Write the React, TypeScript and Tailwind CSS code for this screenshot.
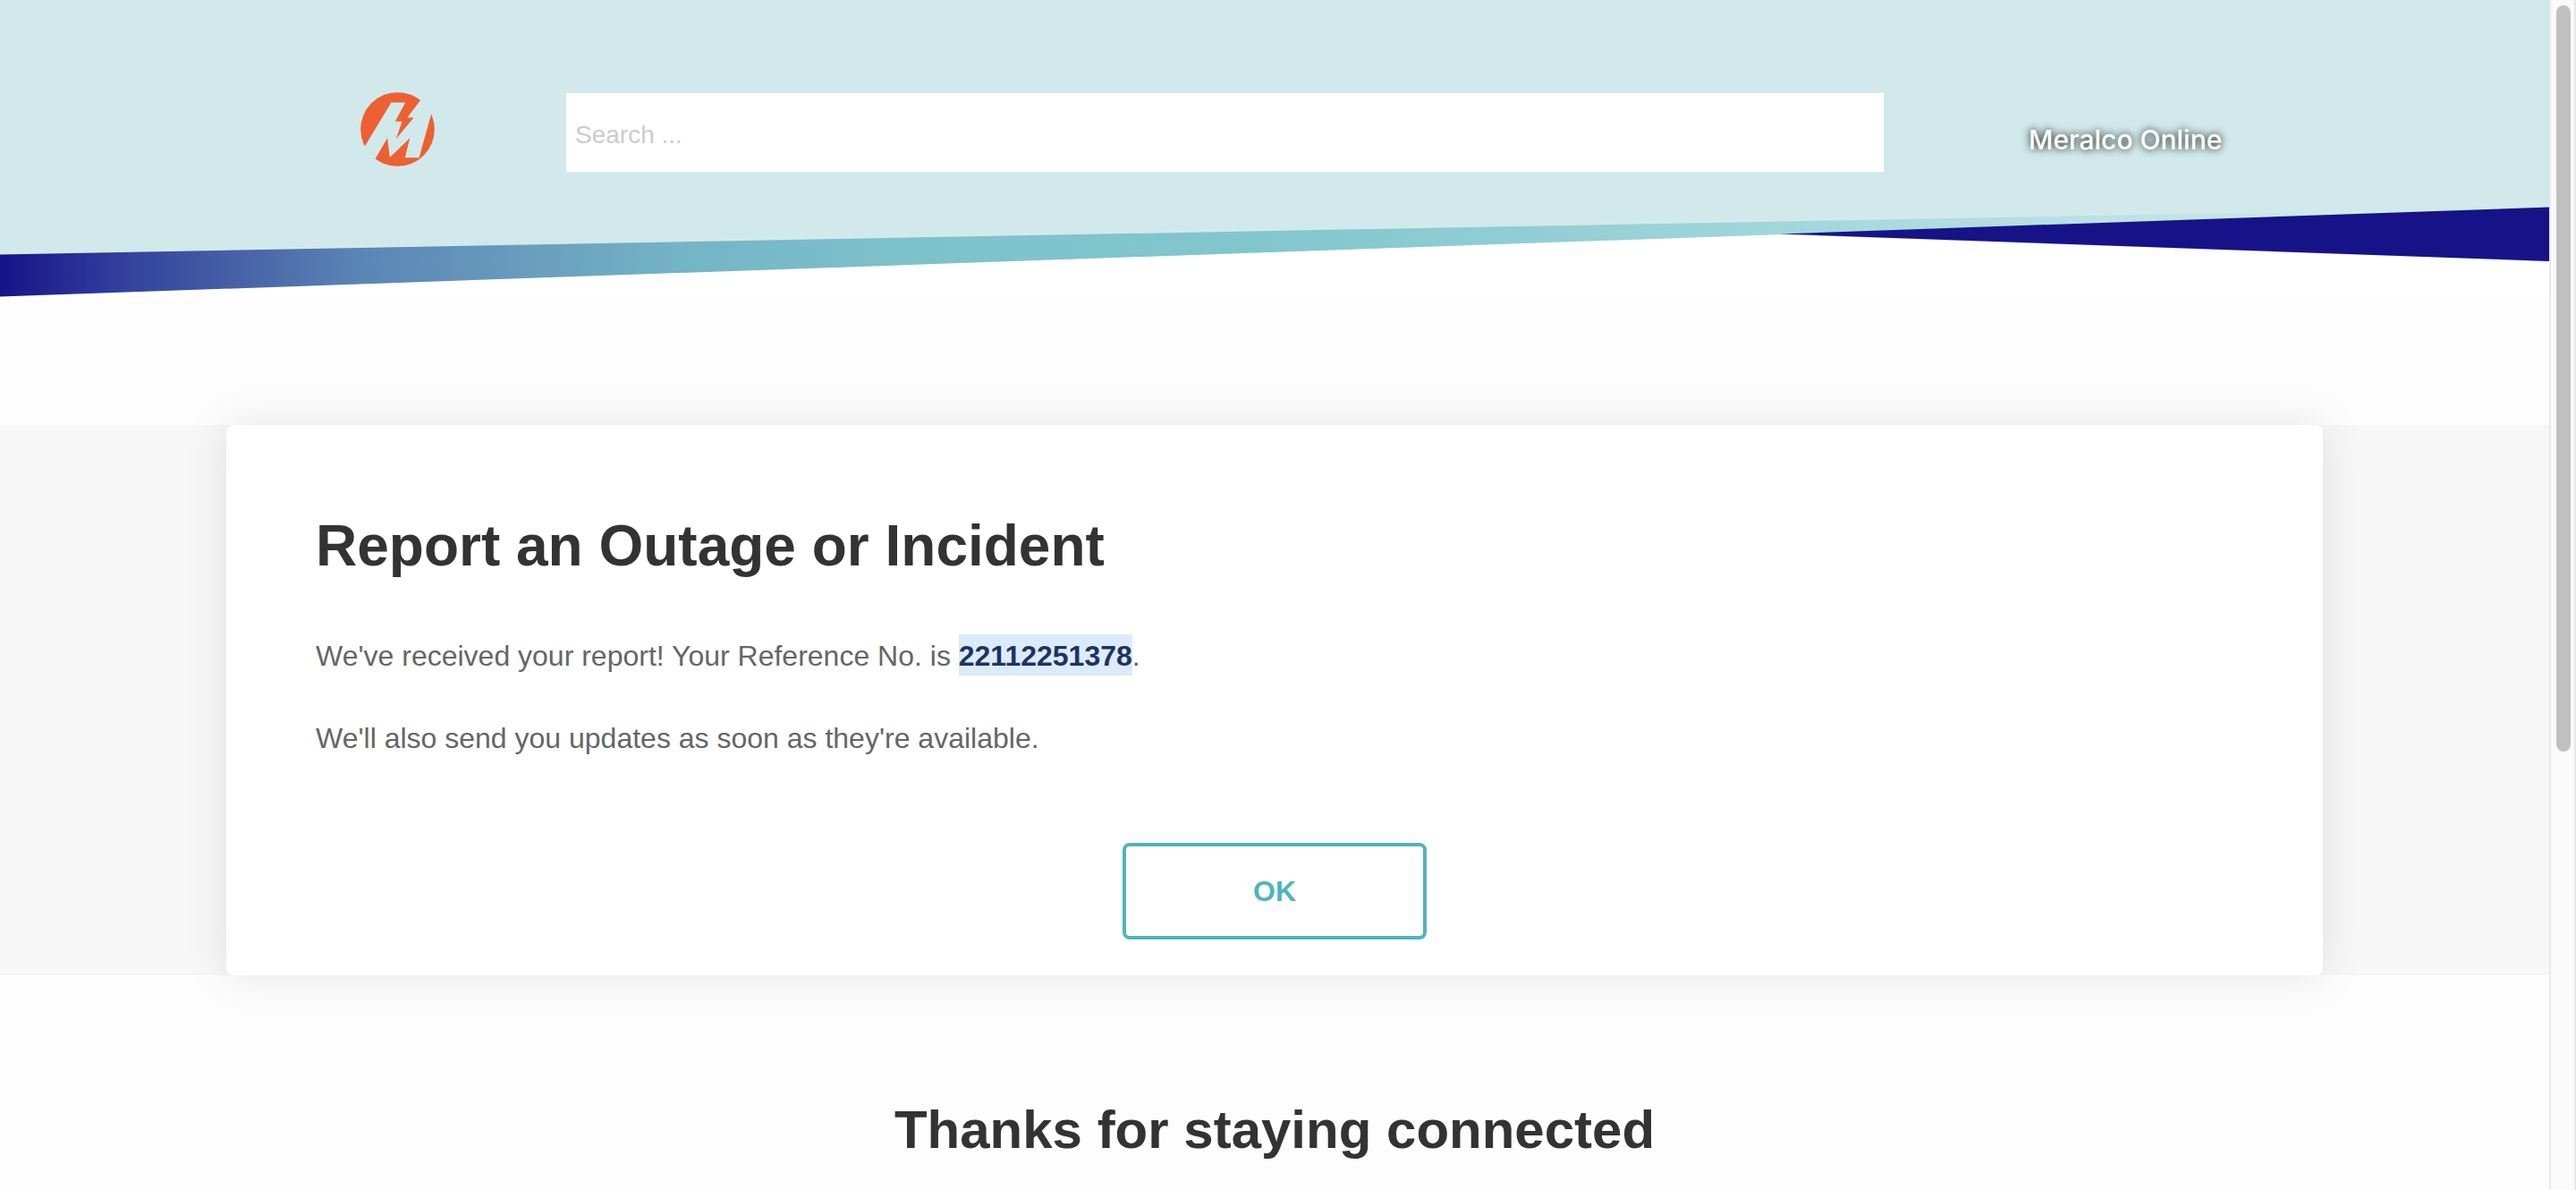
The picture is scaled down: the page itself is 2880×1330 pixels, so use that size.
const bandStops: [string, string][] = [
  ['0', '#16138a'],
  ['0.05', '#33429c'],
  ['0.1', '#4a66a8'],
  ['0.14', '#5985b5'],
  ['0.21', '#6a9ebf'],
  ['0.265', '#73b4c5'],
  ['0.35', '#7dc1cb'],
  ['0.49', '#82c6cd'],
  ['0.6', '#91ced4'],
  ['0.7', '#a1d7db'],
  ['0.8', '#b6dfe3'],
  ['0.92', '#d2e9eb'],
  ['1', '#d2e9eb'],
];

function Logo() {
  return (
    <svg viewBox="0 0 248 248" className="size-[83px]" role="img" aria-label="Meralco">
      <clipPath id="disc">
        <circle cx="124" cy="124" r="123.5" />
      </clipPath>
      <g clipPath="url(#disc)" fill="#ed6031">
        <path d="M0 0H223L200 28L156 85H178L119 156L139 98H116L150 34H103L15 180L0 203Z" />
        <path d="M90 153L98 218L165 153L149 219H196L248 248H24L50 222Z" />
        <path d="M196 219L236 75L248 60V248H190Z" />
      </g>
    </svg>
  );
}

function HeaderWave() {
  return (
    <svg
      viewBox="0 0 2850 112"
      preserveAspectRatio="none"
      className="block h-[112px] w-full"
      aria-hidden="true"
    >
      <defs>
        <linearGradient id="band" gradientUnits="userSpaceOnUse" x1="0" y1="0" x2="2850" y2="0">
          {bandStops.map(([offset, color]) => (
            <stop key={offset} offset={offset} stopColor={color} />
          ))}
        </linearGradient>
      </defs>
      <path d="M0 111L1990 42L2850 72V112H0Z" fill="#fff" />
      <path d="M0 64.5L2850 11.5L1990 42L0 111.5Z" fill="url(#band)" />
      <path d="M1990 41.5L2850 11.5V72Z" fill="#161388" />
    </svg>
  );
}

export default function App() {
  return (
    <div className="flex h-screen overflow-hidden bg-[#fdfdfd] font-['Liberation_Sans',Arial,sans-serif] text-[32px] leading-[46px] text-[#666]">
      <div className="min-w-0 flex-1">
        <header className="bg-[#d2e9eb]">
          <div className="mx-auto flex h-[220px] max-w-[2344px] items-start pt-[103px]">
            <a href="#home" className="ml-[150px] w-[230px] shrink-0">
              <Logo />
            </a>
            <input
              type="search"
              aria-label="Search"
              placeholder="Search ..."
              className="mt-px h-[88px] min-w-0 flex-1 appearance-none bg-white px-2.5 pt-1.5 text-[28px] text-[#333] outline-none placeholder:text-[#ccc]"
            />
            <div className="flex w-[491px] shrink-0 pl-[162px] pt-[30px]">
              <a
                href="#online"
                className="whitespace-nowrap font-['Inter',sans-serif] text-[30px] font-medium text-white [text-shadow:0_0_10px_#000]"
              >
                Meralco Online
              </a>
            </div>
          </div>
          <HeaderWave />
        </header>

        <main className="mt-[143px] bg-[#f7f7f7]">
          <section className="relative mx-auto max-w-[2344px] rounded-lg bg-white px-[100px] pt-[99px] pb-10 shadow-[0_0_50px_rgba(0,0,0,0.1)]">
            <h1 className="text-[64px] leading-[72px] font-bold text-[#333]">
              Report an Outage or Incident
            </h1>
            <p className="mt-16">
              We've received your report! Your Reference No. is{' '}
              <strong className="bg-[#dcebfc] pt-1.5 pb-1 text-[#1d335f]">22112251378</strong>.
            </p>
            <p className="mt-[46px]">We'll also send you updates as soon as they're available.</p>
            <button
              type="button"
              className="mx-auto mt-[94px] block h-[108px] w-[340px] rounded-lg border-4 border-[#50b4bb] font-bold text-[#50b4bb]"
            >
              OK
            </button>
          </section>
        </main>

        <h2 className="mt-[139px] text-center text-[60px] leading-[68px] font-bold text-[#333]">
          Thanks for staying connected
        </h2>
      </div>

      <div className="w-[30px] shrink-0 border-x-2 border-[#e8e8e8] bg-[#fafafa] px-1.5 pt-1.5" aria-hidden="true">
        <div className="h-[834px] w-4 rounded-full bg-[#c1c1c1]" />
      </div>
    </div>
  );
}
